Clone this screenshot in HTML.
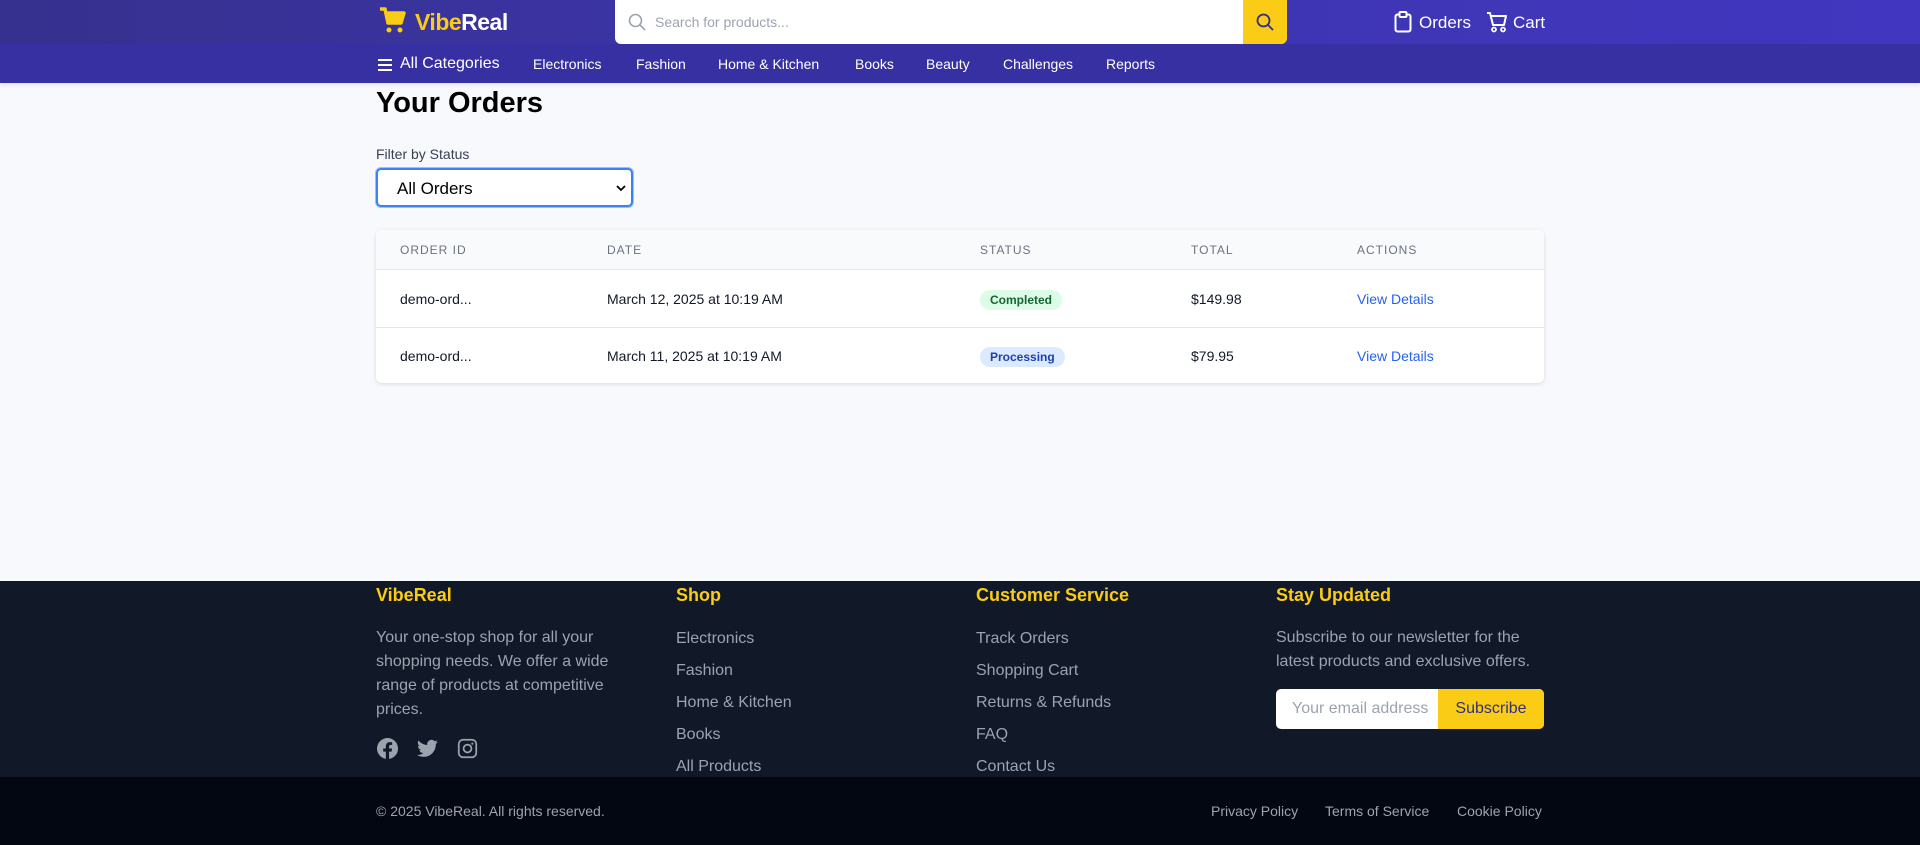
<!DOCTYPE html>
<html><head><meta charset="utf-8"><style>
*{box-sizing:border-box;margin:0;padding:0}
body{width:1920px;height:845px;overflow:hidden;background:#f8f9fc;font-family:"Liberation Sans",Arial,sans-serif;position:relative;color:#111}
.a{position:absolute}
.top{left:0;top:0;width:1920px;height:44px;background:linear-gradient(90deg,#36318e,#3d35ae 50%,#4136c0)}
.nav{left:0;top:44px;width:1920px;height:39px;background:#3730a3;box-shadow:0 2px 4px rgba(0,0,0,.1)}
.nav span{position:absolute;top:12px;color:#fff;font-size:14px}
.th{top:243px;font-size:12px;color:#6b7280;letter-spacing:1px}
.td{font-size:14px;color:#111827}
.fh{top:584px;font-size:18px;font-weight:bold;color:#facc15}
.fl{font-size:16px;color:#9ca3af}
.badge{font-size:12px;font-weight:bold;padding:3px 10px;border-radius:10px;left:980px}
</style></head><body>
<div class="a top"></div>
<div class="a nav">
<svg class="a" style="left:377px;top:13px" width="16" height="16" viewBox="0 0 16 16"><path d="M1 3h14M1 8h14M1 13h14" stroke="#fff" stroke-width="2"/></svg>
<span style="left:400px;font-size:16px;top:11px">All Categories</span>
<span style="left:533px">Electronics</span><span style="left:636px">Fashion</span><span style="left:718px">Home &amp; Kitchen</span><span style="left:855px">Books</span><span style="left:926px">Beauty</span><span style="left:1003px">Challenges</span><span style="left:1106px">Reports</span>
</div>
<svg class="a" style="left:379px;top:6px" width="27" height="28" viewBox="0 0 27 28"><path d="M1 3h5l3 14h13l3-10H8" fill="none" stroke="#facc15" stroke-width="3.5" stroke-linejoin="round"/><path d="M8 7h17l-3 10H10z" fill="#facc15"/><circle cx="10" cy="24" r="2.5" fill="#facc15"/><circle cx="21" cy="24" r="2.5" fill="#facc15"/></svg>
<div class="a" style="left:415px;top:9px;font-size:23px;font-weight:bold;letter-spacing:-0.5px"><span style="color:#facc15">Vibe</span><span style="color:#fff">Real</span></div>
<div class="a" style="left:615px;top:0;width:672px;height:44px;background:#fff;border-radius:0 0 6px 6px;overflow:hidden">
<svg class="a" style="left:13px;top:13px" width="18" height="18" viewBox="0 0 18 18"><circle cx="7.5" cy="7.5" r="6" fill="none" stroke="#9ca3af" stroke-width="1.6"/><path d="M12 12l5 5" stroke="#9ca3af" stroke-width="1.6"/></svg>
<div class="a" style="left:40px;top:14px;font-size:14px;color:#9ca3af">Search for products...</div>
<div class="a" style="right:0;top:0;width:44px;height:44px;background:#facc15"><svg class="a" style="left:13px;top:13px" width="18" height="18" viewBox="0 0 18 18"><circle cx="7.5" cy="7.5" r="6" fill="none" stroke="#312e81" stroke-width="1.8"/><path d="M12 12l5 5" stroke="#312e81" stroke-width="1.8"/></svg></div>
</div>
<svg class="a" style="left:1394px;top:11px" width="18" height="22" viewBox="0 0 18 22"><rect x="1.5" y="3.5" width="15" height="17" rx="2" fill="none" stroke="#fff" stroke-width="2"/><rect x="5.5" y="1" width="7" height="5" rx="1" fill="#3d35ae" stroke="#fff" stroke-width="2"/></svg>
<div class="a" style="left:1419px;top:13px;font-size:17px;color:#fff">Orders</div>
<svg class="a" style="left:1486px;top:11px" width="22" height="22" viewBox="0 0 22 22"><path d="M1 2h3l3 12h11l2-9H5" fill="none" stroke="#fff" stroke-width="2" stroke-linejoin="round"/><circle cx="8" cy="18.5" r="2" fill="none" stroke="#fff" stroke-width="1.8"/><circle cx="17" cy="18.5" r="2" fill="none" stroke="#fff" stroke-width="1.8"/></svg>
<div class="a" style="left:1513px;top:13px;font-size:17px;color:#fff">Cart</div>

<div class="a" style="left:376px;top:87px;font-size:29px;font-weight:bold;color:#000">Your Orders</div>
<div class="a" style="left:376px;top:146px;font-size:14px;color:#374151">Filter by Status</div>
<div class="a" style="left:376px;top:168px;width:257px;height:39px;background:#fff;border:2px solid #3b82f6;border-radius:5px;box-shadow:0 0 0 1px #93c5fd">
<div class="a" style="left:19px;top:9px;font-size:17px;color:#000">All Orders</div>
<svg class="a" style="right:5px;top:14px" width="10" height="8" viewBox="0 0 10 8"><path d="M1 2l4 4 4-4" fill="none" stroke="#000" stroke-width="1.8"/></svg>
</div>
<div class="a" style="left:376px;top:230px;width:1168px;height:153px;background:#fff;border-radius:6px;box-shadow:0 1px 4px rgba(0,0,0,.12);overflow:hidden">
<div class="a" style="left:0;top:0;width:100%;height:40px;background:#f9fafb;border-bottom:1px solid #e5e7eb"></div>
<div class="a" style="left:0;top:97px;width:100%;height:1px;background:#e5e7eb"></div>
</div>
<div class="a th" style="left:400px">ORDER ID</div><div class="a th" style="left:607px">DATE</div><div class="a th" style="left:980px">STATUS</div><div class="a th" style="left:1191px">TOTAL</div><div class="a th" style="left:1357px">ACTIONS</div>
<div class="a td" style="left:400px;top:291px">demo-ord...</div><div class="a td" style="left:607px;top:291px">March 12, 2025 at 10:19 AM</div>
<div class="a badge" style="top:290px;background:#dcfce7;color:#166534">Completed</div>
<div class="a td" style="left:1191px;top:291px">$149.98</div><div class="a td" style="left:1357px;top:291px;color:#2563eb">View Details</div>
<div class="a td" style="left:400px;top:348px">demo-ord...</div><div class="a td" style="left:607px;top:348px">March 11, 2025 at 10:19 AM</div>
<div class="a badge" style="top:347px;background:#dbeafe;color:#1e40af">Processing</div>
<div class="a td" style="left:1191px;top:348px">$79.95</div><div class="a td" style="left:1357px;top:348px;color:#2563eb">View Details</div>

<div class="a" style="left:0;top:581px;width:1920px;height:196px;background:#111827"></div>
<div class="a" style="left:0;top:777px;width:1920px;height:68px;background:#030712"></div>
<div class="a fh" style="left:376px;top:585px">VibeReal</div><div class="a fh" style="left:676px;top:585px">Shop</div><div class="a fh" style="left:976px;top:585px">Customer Service</div><div class="a fh" style="left:1276px;top:585px">Stay Updated</div>
<div class="a fl" style="left:376px;top:626px;width:270px;line-height:24px">Your one-stop shop for all your shopping needs. We offer a wide range of products at competitive prices.</div>
<div class="a fl" style="left:676px;top:623px;line-height:32px">Electronics<br>Fashion<br>Home &amp; Kitchen<br>Books<br>All Products</div>
<div class="a fl" style="left:976px;top:623px;line-height:32px">Track Orders<br>Shopping Cart<br>Returns &amp; Refunds<br>FAQ<br>Contact Us</div>
<div class="a fl" style="left:1276px;top:626px;line-height:24px;width:270px">Subscribe to our newsletter for the latest products and exclusive offers.</div>
<div class="a" style="left:1276px;top:689px;width:268px;height:40px;background:#fff;border-radius:5px;overflow:hidden">
<div class="a" style="left:16px;top:11px;font-size:16px;color:#9ca3af;white-space:nowrap;width:138px;overflow:hidden">Your email address</div>
<div class="a" style="left:162px;top:0;width:106px;height:40px;background:#facc15;color:#312e81;font-size:16px;text-align:center;line-height:40px">Subscribe</div>
</div>
<svg class="a" style="left:377px;top:738px" width="21" height="21" viewBox="0 0 24 24"><path fill="#9ca3af" d="M24 12a12 12 0 1 0-13.9 11.9v-8.4h-3V12h3V9.4c0-3 1.8-4.7 4.5-4.7 1.3 0 2.7.2 2.7.2v3h-1.5c-1.5 0-2 .9-2 1.9V12h3.4l-.5 3.5h-2.9v8.4A12 12 0 0 0 24 12z"/></svg>
<svg class="a" style="left:417px;top:739px" width="21" height="19" viewBox="0 0 24 20"><path fill="#9ca3af" d="M24 2.4a10 10 0 0 1-2.8.8A5 5 0 0 0 23.3.5a10 10 0 0 1-3.1 1.2A4.9 4.9 0 0 0 11.8 6 14 14 0 0 1 1.7.9a4.9 4.9 0 0 0 1.5 6.6A4.9 4.9 0 0 1 1 6.9a4.9 4.9 0 0 0 3.9 4.8 5 5 0 0 1-2.2.1 4.9 4.9 0 0 0 4.6 3.4A9.9 9.9 0 0 1 0 17.3 14 14 0 0 0 7.5 19.5c9.1 0 14-7.5 14-14v-.6A10 10 0 0 0 24 2.4z"/></svg>
<svg class="a" style="left:457px;top:738px" width="21" height="21" viewBox="0 0 24 24"><rect x="2" y="2" width="20" height="20" rx="5" fill="none" stroke="#9ca3af" stroke-width="2"/><circle cx="12" cy="12" r="4.5" fill="none" stroke="#9ca3af" stroke-width="2"/><circle cx="17.5" cy="6.5" r="1.2" fill="#9ca3af"/></svg>
<div class="a" style="left:376px;top:803px;font-size:14px;color:#9ca3af">© 2025 VibeReal. All rights reserved.</div>
<div class="a" style="left:1211px;top:803px;font-size:14px;color:#9ca3af">Privacy Policy</div>
<div class="a" style="left:1325px;top:803px;font-size:14px;color:#9ca3af">Terms of Service</div>
<div class="a" style="left:1457px;top:803px;font-size:14px;color:#9ca3af">Cookie Policy</div>
</body></html>
